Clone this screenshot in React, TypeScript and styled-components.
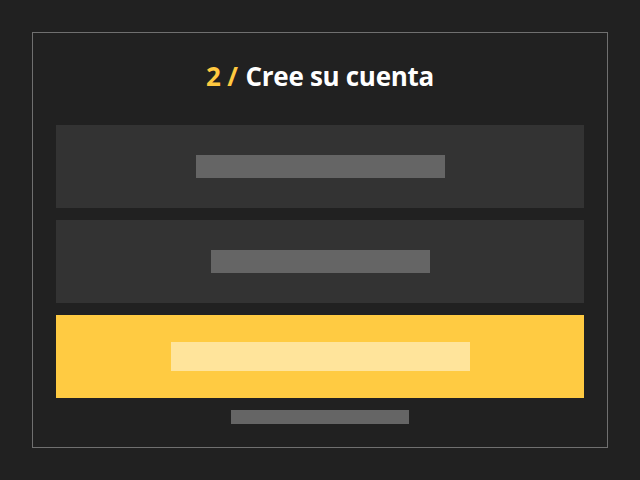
import * as React from 'react';
import styled, { createGlobalStyle } from 'styled-components';

const GlobalStyle = createGlobalStyle`
  html, body {
    margin: 0;
    padding: 0;
    background-color: #212121;
  }
  body {
    font-family: 'Open Sans', 'Noto Sans', sans-serif;
  }
`

const StyledPage = styled.div`
  padding: 32px;
  box-sizing: border-box;
  width: 640px;
  height: 480px;
`

const StyledFrame = styled.div`
  box-sizing: border-box;
  width: 576px;
  height: 416px;
  border: 1px solid #707070;
  padding: 0 23px 22px;
  display: flex;
  flex-direction: column;
  align-items: stretch;
`

const StyledTitle = styled.h1`
  margin: 0;
  box-sizing: border-box;
  height: 92px;
  padding-bottom: 6px;
  display: flex;
  align-items: center;
  justify-content: center;
  gap: 8px;
  font-size: 26px;
  line-height: 32px;
  font-weight: 700;
  color: #ffffff;
  letter-spacing: -0.3px;
`

const StyledStep = styled.span`
  color: #ffc940;
`

const StyledOptions = styled.div`
  display: flex;
  flex-direction: column;
  gap: 12px;
`

const StyledOption = styled.div<{ primary?: boolean }>`
  height: 83px;
  display: flex;
  align-items: center;
  justify-content: center;
  background-color: ${(props) => (props.primary ? '#ffcb42' : '#333333')};
`

const StyledLabel = styled.div<{ width: number; primary?: boolean }>`
  width: ${(props) => props.width}px;
  height: ${(props) => (props.primary ? 29 : 23)}px;
  background-color: ${(props) => (props.primary ? '#ffe49b' : '#656565')};
`

const StyledFooter = styled.div`
  margin-top: 12px;
  display: flex;
  justify-content: center;
`

const StyledFooterLink = styled.div`
  width: 178px;
  height: 14px;
  background-color: #656565;
`

export default function App() {
  return (
    <StyledPage>
      <GlobalStyle />
      <StyledFrame>
        <StyledTitle>
          <StyledStep>2 /</StyledStep>
          <span>Cree su cuenta</span>
        </StyledTitle>
        <StyledOptions>
          <StyledOption>
            <StyledLabel width={249} />
          </StyledOption>
          <StyledOption>
            <StyledLabel width={219} />
          </StyledOption>
          <StyledOption primary>
            <StyledLabel width={299} primary />
          </StyledOption>
        </StyledOptions>
        <StyledFooter>
          <StyledFooterLink />
        </StyledFooter>
      </StyledFrame>
    </StyledPage>
  )
}
